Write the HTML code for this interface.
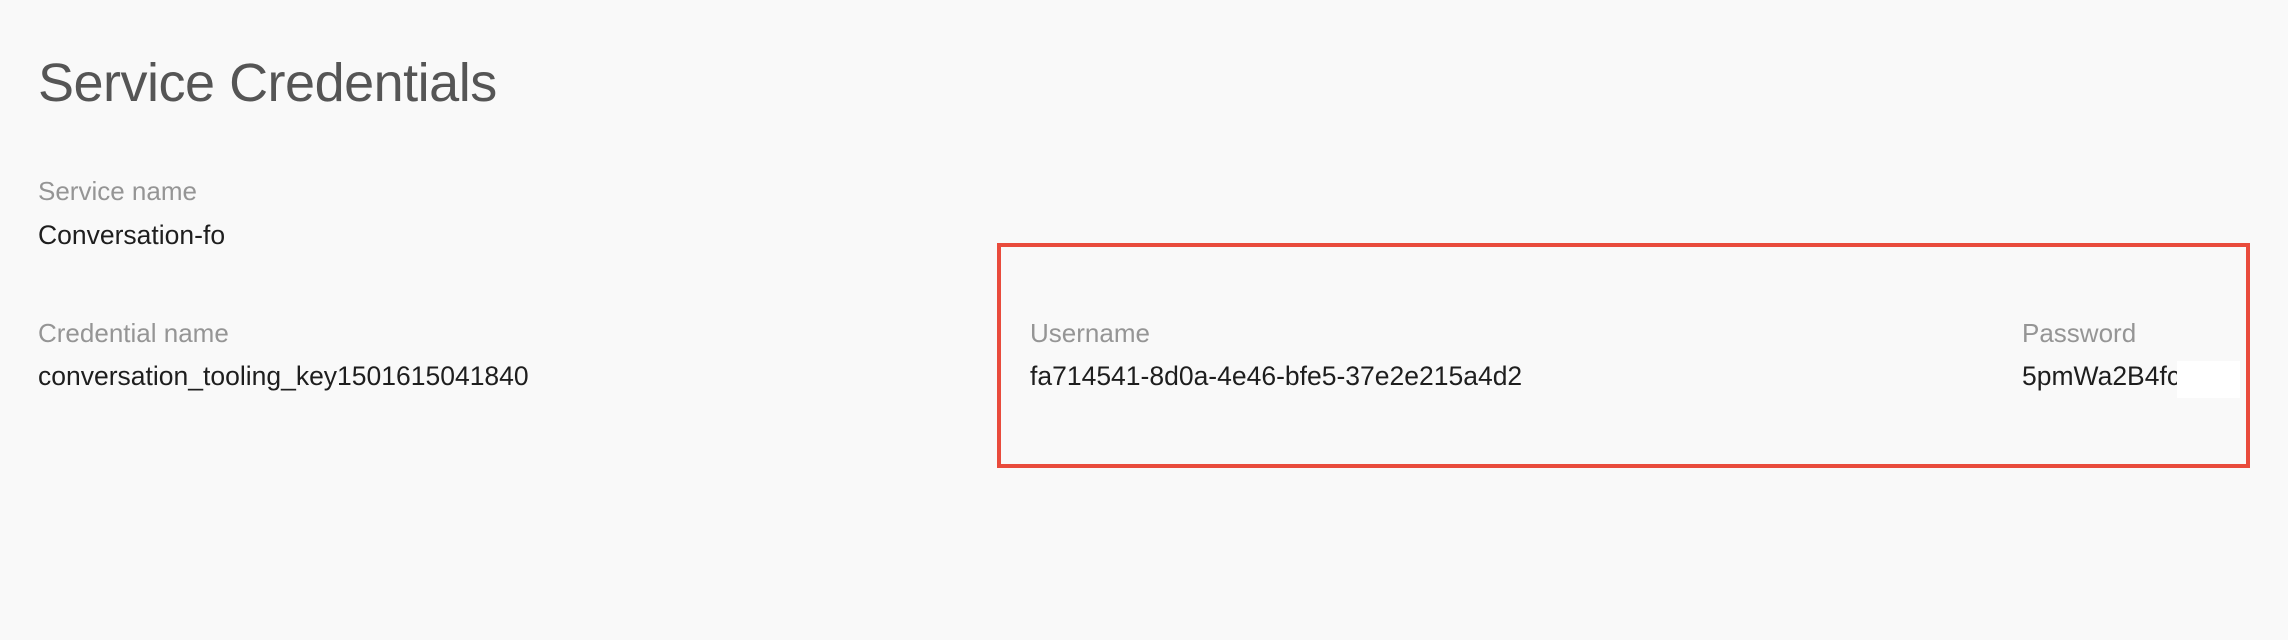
<!DOCTYPE html>
<html><head><style>
html,body{margin:0;padding:0;}
body{width:2288px;height:640px;background:#f9f9f9;position:relative;overflow:hidden;font-family:"Liberation Sans",Arial,sans-serif;}
.t{position:absolute;white-space:nowrap;line-height:1;}
.title{left:38px;top:56px;font-size:54px;color:#555;letter-spacing:-0.5px;}
.lab{font-size:26px;color:#959595;}
.val{font-size:26.5px;color:#1e1e1e;letter-spacing:0;}
.box{position:absolute;left:997px;top:243px;width:1245px;height:217px;border:4px solid #e94b3c;}
.mask{position:absolute;left:2177px;top:361px;width:63px;height:37px;background:#fff;}
</style></head><body>
<div class="t title">Service Credentials</div>
<div class="t lab" style="left:38px;top:178px">Service name</div>
<div class="t val" style="left:38px;top:222px">Conversation-fo</div>
<div class="t lab" style="left:38px;top:320px">Credential name</div>
<div class="t val" style="left:38px;top:363px">conversation_tooling_key1501615041840</div>
<div class="box"></div>
<div class="t lab" style="left:1030px;top:320px">Username</div>
<div class="t val" style="left:1030px;top:363px">fa714541-8d0a-4e46-bfe5-37e2e215a4d2</div>
<div class="t lab" style="left:2022px;top:320px">Password</div>
<div class="t val" style="left:2022px;top:363px">5pmWa2B4fc</div>
<div class="mask"></div>
</body></html>
